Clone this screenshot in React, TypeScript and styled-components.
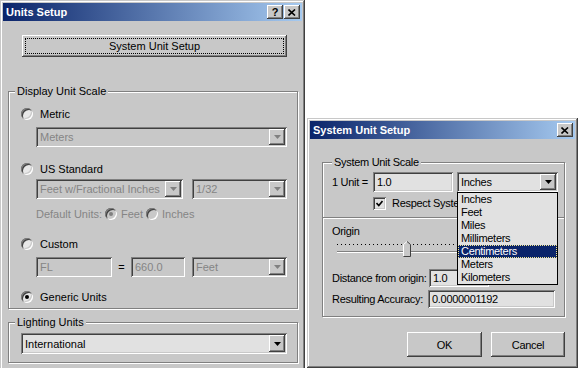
import React from "react";
import styled, { createGlobalStyle } from "styled-components";

const FACE = "#c8c8c8";
const FIELD = "#e1e1e1";
const SHADOW = "#808080";
const DARK = "#404040";
const GRAY_TEXT = "#858585";

const sunken = `inset 1px 1px ${SHADOW}, inset -1px -1px #fff, inset 2px 2px ${DARK}, inset -2px -2px ${FACE}`;
const raised = `inset -1px -1px ${DARK}, inset 1px 1px #fff, inset -2px -2px ${SHADOW}, inset 2px 2px ${FACE}`;

const GlobalStyle = createGlobalStyle`
  html, body {
    margin: 0;
    padding: 0;
    background: #fff;
  }
  body {
    font-family: "Liberation Sans", Arial, sans-serif;
    font-size: 11px;
    color: #000;
  }
`;

const Desktop = styled.div`
  position: relative;
  width: 578px;
  height: 368px;
  overflow: hidden;
  background: #fff;
`;

const Window = styled.div<{ $x: number; $y: number; $w: number; $h: number }>`
  position: absolute;
  left: ${(p) => p.$x}px;
  top: ${(p) => p.$y}px;
  width: ${(p) => p.$w}px;
  height: ${(p) => p.$h}px;
  box-sizing: border-box;
  padding: 3px;
  background: ${FACE};
  box-shadow: inset -1px -1px ${DARK}, inset 1px 1px ${FACE}, inset -2px -2px ${SHADOW},
    inset 2px 2px #fff;
  display: flex;
  flex-direction: column;
`;

const TitleBar = styled.div`
  height: 18px;
  flex: none;
  display: flex;
  align-items: center;
  justify-content: space-between;
  padding: 0 2px 0 3px;
  background: linear-gradient(to right, #0a246a, #a6caf0);
  color: #fff;
`;

const TitleText = styled.span`
  font-weight: bold;
  font-size: 11px;
  line-height: 13px;
`;

const TitleButtons = styled.div`
  display: flex;
  gap: 1px;
`;

const TitleButton = styled.div`
  width: 16px;
  height: 14px;
  box-sizing: border-box;
  background: ${FACE};
  box-shadow: ${raised};
  display: flex;
  align-items: center;
  justify-content: center;
  color: #000;
  font-weight: bold;
  font-size: 11px;
  line-height: 11px;
`;

const Body = styled.div<{ $pt: number; $pl: number; $pr: number; $ls?: number }>`
  display: flex;
  flex-direction: column;
  padding: ${(p) => p.$pt}px ${(p) => p.$pr}px 0 ${(p) => p.$pl}px;
  letter-spacing: ${(p) => p.$ls ?? 0}px;
`;

const PushButton = styled.div<{ $w?: number; $h: number }>`
  box-sizing: border-box;
  height: ${(p) => p.$h}px;
  ${(p) => (p.$w ? `width: ${p.$w}px;` : "")}
  background: ${FACE};
  box-shadow: ${raised};
  display: flex;
  align-items: center;
  justify-content: center;
  padding: 3px;
`;

const SetupButton = styled(PushButton)`
  margin: 0 11px 0 14px;
`;

const FocusRect = styled.div`
  flex: 1;
  align-self: stretch;
  border: 1px dotted #000;
  display: flex;
  align-items: center;
  justify-content: center;
`;

const Group = styled.div<{ $mt: number }>`
  margin-top: ${(p) => p.$mt}px;
  border: 1px solid ${SHADOW};
  box-shadow: inset 1px 1px #fff, 1px 1px #fff;
  display: flex;
  flex-direction: column;
`;

const GroupLabel = styled.div<{ $ml: number }>`
  align-self: flex-start;
  margin: -7px 0 0 ${(p) => p.$ml}px;
  padding: 0 2px;
  height: 13px;
  line-height: 13px;
  background: ${FACE};
  white-space: nowrap;
`;

const GroupContent = styled.div<{ $pl: number; $pr: number; $pb: number }>`
  display: flex;
  flex-direction: column;
  padding: 0 ${(p) => p.$pr}px ${(p) => p.$pb}px ${(p) => p.$pl}px;
`;

const Row = styled.div<{ $mt: number; $ml?: number; $h: number; $gap?: number }>`
  display: flex;
  align-items: center;
  margin-top: ${(p) => p.$mt}px;
  margin-left: ${(p) => p.$ml ?? 0}px;
  height: ${(p) => p.$h}px;
  gap: ${(p) => p.$gap ?? 0}px;
  white-space: nowrap;
`;

const Text = styled.span<{ $disabled?: boolean; $w?: number; $ml?: number }>`
  color: ${(p) => (p.$disabled ? GRAY_TEXT : "#000")};
  line-height: 13px;
  white-space: nowrap;
  ${(p) => (p.$w ? `width: ${p.$w}px; flex: none;` : "")}
  margin-left: ${(p) => p.$ml ?? 0}px;
`;

const RadioCircle = styled.span<{ $on?: boolean; $disabled?: boolean; $ml?: number }>`
  width: 12px;
  height: 12px;
  flex: none;
  margin-left: ${(p) => p.$ml ?? 0}px;
  border-radius: 50%;
  box-sizing: border-box;
  background: ${(p) => (p.$disabled ? FACE : "#e8e8e8")};
  box-shadow: ${sunken};
  display: flex;
  align-items: center;
  justify-content: center;
  &::after {
    content: "";
    display: ${(p) => (p.$on ? "block" : "none")};
    width: 4px;
    height: 4px;
    border-radius: 50%;
    background: ${(p) => (p.$disabled ? SHADOW : "#000")};
  }
`;

const CheckBox = styled.span`
  width: 13px;
  height: 13px;
  flex: none;
  box-sizing: border-box;
  background: ${FIELD};
  box-shadow: ${sunken};
  display: flex;
  align-items: center;
  justify-content: center;
`;

const Field = styled.div<{ $w?: number; $h: number; $disabled?: boolean; $ml?: number }>`
  position: relative;
  box-sizing: border-box;
  height: ${(p) => p.$h}px;
  margin-left: ${(p) => p.$ml ?? 0}px;
  ${(p) => (p.$w ? `width: ${p.$w}px; flex: none;` : "flex: 1; min-width: 0;")}
  background: ${(p) => (p.$disabled ? FACE : FIELD)};
  color: ${(p) => (p.$disabled ? GRAY_TEXT : "#000")};
  box-shadow: ${sunken};
  padding: 2px;
  display: flex;
  align-items: stretch;
`;

const FieldText = styled.span`
  flex: 1;
  min-width: 0;
  overflow: hidden;
  white-space: nowrap;
  display: flex;
  align-items: center;
  padding-left: 2px;
`;

const ArrowButton = styled.span`
  width: 16px;
  flex: none;
  box-sizing: border-box;
  background: ${FACE};
  box-shadow: ${raised};
  display: flex;
  align-items: center;
  justify-content: center;
`;

const DropList = styled.div`
  position: absolute;
  left: 0;
  right: 0;
  top: 100%;
  z-index: 2;
  box-sizing: border-box;
  border: 1px solid #000;
  background: ${FIELD};
  color: #000;
  display: flex;
  flex-direction: column;
`;

const DropItem = styled.div<{ $selected?: boolean }>`
  height: 13px;
  line-height: 13px;
  padding-left: 3px;
  box-sizing: border-box;
  white-space: nowrap;
  background: ${(p) => (p.$selected ? "#0a246a" : "transparent")};
  color: ${(p) => (p.$selected ? "#fff" : "#000")};
  outline: ${(p) => (p.$selected ? "1px dotted #f4e890" : "none")};
  outline-offset: -1px;
`;

const Equals = styled.span`
  width: 19px;
  flex: none;
  text-align: center;
`;

const Separator = styled.div<{ $mt: number }>`
  margin-top: ${(p) => p.$mt}px;
  height: 1px;
  background: ${SHADOW};
  border-bottom: 1px solid #fff;
`;

const SliderBox = styled.div`
  position: relative;
  height: 16px;
  margin: 3px 6px 0 5px;
  display: flex;
  flex-direction: column;
`;

const Ticks = styled.div`
  margin-top: 3px;
  height: 1px;
  background: repeating-linear-gradient(to right, #000 0 1px, transparent 1px 4px);
`;

const Track = styled.div`
  margin-top: 6px;
  height: 2px;
  box-sizing: border-box;
  border-top: 1px solid ${SHADOW};
  border-bottom: 1px solid #fff;
`;

const Thumb = styled.svg`
  position: absolute;
  top: 0;
`;

const ButtonRow = styled.div`
  display: flex;
  justify-content: flex-end;
  gap: 9px;
  margin-top: 15px;
`;

const DownArrow = ({ disabled }: { disabled?: boolean }) => (
  <svg width="7" height="4" viewBox="0 0 7 4">
    <polygon points="0,0 7,0 3.5,4" fill={disabled ? SHADOW : "#000"} />
  </svg>
);

const Combo = ({
  value,
  w,
  h = 20,
  ml,
  disabled,
  children,
}: {
  value: string;
  w?: number;
  h?: number;
  ml?: number;
  disabled?: boolean;
  children?: React.ReactNode;
}) => (
  <Field $w={w} $h={h} $ml={ml} $disabled={disabled}>
    <FieldText>{value}</FieldText>
    <ArrowButton>
      <DownArrow disabled={disabled} />
    </ArrowButton>
    {children}
  </Field>
);

const Edit = ({ value, w, h = 20, disabled }: { value: string; w?: number; h?: number; disabled?: boolean }) => (
  <Field $w={w} $h={h} $disabled={disabled}>
    <FieldText>{value}</FieldText>
  </Field>
);

const CloseIcon = () => (
  <svg width="8" height="7" viewBox="0 0 8 7">
    <path d="M0.5 0.5 L7 6.5 M7 0.5 L0.5 6.5" stroke="#000" strokeWidth="1.6" />
  </svg>
);

const units = ["Inches", "Feet", "Miles", "Millimeters", "Centimeters", "Meters", "Kilometers"];

export default function App() {
  const sliderPos = 66;
  return (
    <>
      <GlobalStyle />
      <Desktop>
        <Window $x={0} $y={0} $w={305} $h={372}>
          <TitleBar>
            <TitleText>Units Setup</TitleText>
            <TitleButtons>
              <TitleButton>?</TitleButton>
              <TitleButton>
                <CloseIcon />
              </TitleButton>
            </TitleButtons>
          </TitleBar>
          <Body $pt={14} $pl={5} $pr={4}>
            <SetupButton $h={22}>
              <FocusRect>System Unit Setup</FocusRect>
            </SetupButton>

            <Group $mt={34}>
              <GroupLabel $ml={6}>Display Unit Scale</GroupLabel>
              <GroupContent $pl={12} $pr={10} $pb={4}>
                <Row $mt={9} $h={14} $gap={7}>
                  <RadioCircle />
                  <Text>Metric</Text>
                </Row>
                <Row $mt={6} $ml={15} $h={20}>
                  <Combo value="Meters" disabled />
                </Row>

                <Row $mt={15} $h={14} $gap={7}>
                  <RadioCircle />
                  <Text>US Standard</Text>
                </Row>
                <Row $mt={3} $ml={15} $h={20} $gap={9}>
                  <Combo value="Feet w/Fractional Inches" w={147} disabled />
                  <Combo value="1/32" disabled />
                </Row>
                <Row $mt={8} $ml={15} $h={14}>
                  <Text $disabled>Default Units:</Text>
                  <RadioCircle $on $disabled $ml={3} />
                  <Text $disabled $ml={4}>Feet</Text>
                  <RadioCircle $disabled $ml={3} />
                  <Text $disabled $ml={4}>Inches</Text>
                </Row>

                <Row $mt={16} $h={14} $gap={7}>
                  <RadioCircle />
                  <Text>Custom</Text>
                </Row>
                <Row $mt={6} $ml={15} $h={20}>
                  <Edit value="FL" w={76} disabled />
                  <Equals>=</Equals>
                  <Edit value="660.0" w={54} disabled />
                  <Combo value="Feet" disabled ml={7} />
                </Row>

                <Row $mt={13} $h={14} $gap={7}>
                  <RadioCircle $on />
                  <Text>Generic Units</Text>
                </Row>
              </GroupContent>
            </Group>

            <Group $mt={13}>
              <GroupLabel $ml={6}>Lighting Units</GroupLabel>
              <GroupContent $pl={12} $pr={10} $pb={8}>
                <Row $mt={4} $h={21}>
                  <Combo value="International" h={21} />
                </Row>
              </GroupContent>
            </Group>
          </Body>
        </Window>

        <Window $x={307} $y={118} $w={271} $h={250}>
          <TitleBar>
            <TitleText>System Unit Setup</TitleText>
            <TitleButton>
              <CloseIcon />
            </TitleButton>
          </TitleBar>
          <Body $pt={23} $pl={12} $pr={10} $ls={-0.3}>
            <Group $mt={0}>
              <GroupLabel $ml={9}>System Unit Scale</GroupLabel>
              <GroupContent $pl={9} $pr={5} $pb={8}>
                <Row $mt={3} $h={20} $gap={4}>
                  <Text $w={37}>1 Unit =</Text>
                  <Edit value="1.0" w={80} />
                  <Combo value="Inches" w={101} h={20}>
                    <DropList>
                      {units.map((u) => (
                        <DropItem key={u} $selected={u === "Centimeters"}>
                          {u}
                        </DropItem>
                      ))}
                    </DropList>
                  </Combo>
                </Row>
                <Row $mt={5} $ml={41} $h={13} $gap={6}>
                  <CheckBox>
                    <svg width="7" height="7" viewBox="0 0 7 7">
                      <path d="M0.5 3 L2.8 5.5 L6.5 1" stroke="#000" strokeWidth="1.6" fill="none" />
                    </svg>
                  </CheckBox>
                  <Text>Respect System Units in Files</Text>
                </Row>
              </GroupContent>
              <Separator $mt={-1} />
              <GroupContent $pl={9} $pr={6} $pb={8}>
                <Row $mt={6} $h={13}>
                  <Text>Origin</Text>
                </Row>
                <SliderBox>
                  <Ticks />
                  <Track />
                  <Thumb width="8" height="16" viewBox="0 0 8 16" style={{ left: sliderPos }}>
                    <polygon points="0.5,3.5 4,0.5 7.5,3.5 7.5,15.5 0.5,15.5" fill={FACE} />
                    <polyline points="0.5,15 0.5,3.5 4,0.5" stroke="#fff" fill="none" />
                    <polyline points="4,0.5 7.5,3.5 7.5,15.5 0.5,15.5" stroke={DARK} fill="none" />
                  </Thumb>
                </SliderBox>
                <Row $mt={12} $h={18}>
                  <Text $w={97}>Distance from origin:</Text>
                  <Edit value="1.0" w={60} h={18} />
                </Row>
                <Row $mt={3} $h={18}>
                  <Text $w={96}>Resulting Accuracy:</Text>
                  <Edit value="0.0000001192" w={127} h={18} />
                </Row>
              </GroupContent>
            </Group>
            <ButtonRow>
              <PushButton $w={75} $h={25}>OK</PushButton>
              <PushButton $w={74} $h={25}>Cancel</PushButton>
            </ButtonRow>
          </Body>
        </Window>
      </Desktop>
    </>
  );
}
